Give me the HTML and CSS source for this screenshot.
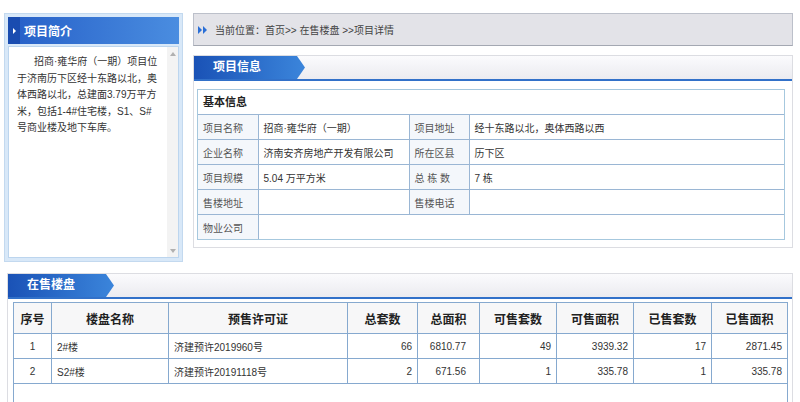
FILE: index.html
```html
<!DOCTYPE html>
<html lang="zh-CN">
<head>
<meta charset="utf-8">
<title>项目详情</title>
<link rel="stylesheet" href="styles.css">
</head>
<body>
<div class="top">
  <div class="intro">
    <div class="intro-head"><span class="intro-arrow"></span><span class="intro-title">项目简介</span></div>
    <div class="intro-body">
      <p class="intro-text">招商·雍华府（一期）项目位于济南历下区经十东路以北，奥体西路以北，总建面3.79万平方米，包括1-4#住宅楼，S1、S#号商业楼及地下车库。</p>
      <div class="scroll"><span class="tri-up"></span><span class="tri-down"></span></div>
    </div>
  </div>
  <div class="main">
    <div class="crumb">
      <svg class="crumb-icon" width="10" height="8" viewBox="0 0 10 8"><polygon points="0,0 4,4 0,8" fill="#2a6fd6"/><polygon points="5,0 9,4 5,8" fill="#2a6fd6"/></svg>
      <span>当前位置：首页&gt;&gt; 在售楼盘 &gt;&gt;项目详情</span>
    </div>
    <div class="panel">
      <div class="panel-head"><div class="tab tab-info">项目信息</div></div>
      <div class="basic">
        <div class="basic-title">基本信息</div>
        <table class="info">
          <colgroup><col class="c-lab"><col class="c-val"><col class="c-lab"><col></colgroup>
          <tr><td class="lab">项目名称</td><td>招商·雍华府（一期）</td><td class="lab">项目地址</td><td>经十东路以北，奥体西路以西</td></tr>
          <tr><td class="lab">企业名称</td><td>济南安齐房地产开发有限公司</td><td class="lab">所在区县</td><td>历下区</td></tr>
          <tr><td class="lab">项目规模</td><td>5.04 万平方米</td><td class="lab">总 栋 数</td><td>7 栋</td></tr>
          <tr><td class="lab">售楼地址</td><td></td><td class="lab">售楼电话</td><td></td></tr>
          <tr><td class="lab">物业公司</td><td colspan="3"></td></tr>
        </table>
      </div>
    </div>
  </div>
</div>
<div class="panel sale">
  <div class="panel-head"><div class="tab tab-sale">在售楼盘</div></div>
  <table class="list">
    <colgroup>
      <col style="width:38px"><col style="width:117px"><col style="width:179px"><col style="width:70px"><col style="width:62px"><col style="width:77px"><col style="width:77px"><col style="width:78px"><col style="width:76px">
    </colgroup>
    <tr><th>序号</th><th>楼盘名称</th><th>预售许可证</th><th>总套数</th><th>总面积</th><th>可售套数</th><th>可售面积</th><th>已售套数</th><th>已售面积</th></tr>
    <tr><td class="ctr">1</td><td>2#楼</td><td>济建预许2019960号</td><td class="num">66</td><td class="num wide">6810.77</td><td class="num">49</td><td class="num">3939.32</td><td class="num">17</td><td class="num">2871.45</td></tr>
    <tr><td class="ctr">2</td><td>S2#楼</td><td>济建预许20191118号</td><td class="num">2</td><td class="num wide">671.56</td><td class="num">1</td><td class="num">335.78</td><td class="num">1</td><td class="num">335.78</td></tr>
    <tr><td colspan="9" class="pager"></td></tr>
  </table>
</div>
</body>
</html>
```
FILE: styles.css
```css
html, body {
  margin: 0;
  padding: 0;
  background: #fff;
}
body {
  font-family: "Liberation Sans", "Noto Sans CJK SC", sans-serif;
  font-size: 10px;
  color: #333;
}
.top {
  display: flex;
  gap: 10px;
  padding: 13px 7px 0 4px;
  align-items: flex-start;
}
.intro {
  width: 179px;
  height: 249px;
  box-sizing: border-box;
  border: 1px solid #c3d9ef;
  background: #d8e8f8;
  padding: 3px;
  display: flex;
  flex-direction: column;
}
.intro-head {
  height: 27px;
  flex: none;
  display: flex;
  align-items: center;
  background: linear-gradient(to right, #1a4cb0 0, #1a4cb0 12px, #2862c9 12px, #4a8de0 100%);
  color: #fff;
  font-weight: bold;
  font-size: 12px;
}
.intro-arrow {
  width: 0;
  height: 0;
  border-left: 3px solid #fff;
  border-top: 3px solid transparent;
  border-bottom: 3px solid transparent;
  margin-left: 5px;
}
.intro-title {
  margin-left: 8px;
}
.intro-body {
  margin-top: 2px;
  flex: 1;
  background: #fff;
  border: 1px solid #bcd5ee;
  display: flex;
}
.intro-text {
  flex: 1;
  margin: 0;
  padding: 7px 7px 0 8px;
  font-size: 10px;
  line-height: 16.5px;
  text-indent: 17px;
  color: #333;
}
.scroll {
  width: 11px;
  flex: none;
  background: #f3f3f3;
  display: flex;
  flex-direction: column;
  justify-content: space-between;
  align-items: center;
  padding: 5px 0 4px;
}
.tri-up {
  width: 0;
  height: 0;
  border-bottom: 4px solid #b0b0b0;
  border-left: 3px solid transparent;
  border-right: 3px solid transparent;
}
.tri-down {
  width: 0;
  height: 0;
  border-top: 4px solid #b0b0b0;
  border-left: 3px solid transparent;
  border-right: 3px solid transparent;
}
.main {
  flex: 1;
  display: flex;
  flex-direction: column;
  gap: 9px;
}
.crumb {
  height: 33px;
  box-sizing: border-box;
  border: 1px solid #bcc0ca;
  border-bottom-color: #a4a8b2;
  background: #e3e3e8;
  display: flex;
  align-items: center;
  padding-left: 4px;
  color: #444;
  font-size: 10px;
}
.crumb-icon {
  margin-right: 7px;
}
.panel {
  border: 1px solid #dcdde2;
  background: #fff;
}
.panel-head {
  height: 23px;
  background: linear-gradient(#fbfbfd, #ebebf0);
  border-bottom: 2px solid #3271c9;
}
.tab {
  height: 100%;
  box-sizing: border-box;
  background: linear-gradient(to right, #1a52b6, #3b85db);
  color: #fff;
  font-weight: bold;
  font-size: 12px;
  line-height: 23px;
  padding-left: 19px;
}
.tab-info {
  width: 111px;
  clip-path: polygon(0 0, 103px 0, 111px 50%, 103px 100%, 0 100%);
}
.tab-sale {
  width: 106px;
  clip-path: polygon(0 0, 98px 0, 106px 50%, 98px 100%, 0 100%);
}
.basic {
  margin: 8px 7px 7px 3px;
  border: 1px solid #a6c8de;
}
.basic-title {
  height: 24px;
  line-height: 25px;
  font-weight: bold;
  font-size: 11px;
  padding-left: 5px;
  color: #222;
}
.info {
  width: 100%;
  border-collapse: collapse;
}
.c-lab {
  width: 60px;
}
.c-val {
  width: 151px;
}
.info td {
  border: 1px solid #9ab6d4;
  height: 24px;
  padding: 0 0 0 5px;
  color: #333;
}
.info td.lab {
  background: #f4f7fb;
  color: #555;
}
.info tr td:first-child {
  border-left: none;
}
.info tr td:last-child {
  border-right: none;
}
.info tr:last-child td {
  border-bottom: none;
}
.sale {
  margin: 11px 7px 0 7px;
}
.list {
  margin: 3px 5px 0 5px;
  width: 774px;
  border-collapse: collapse;
  table-layout: fixed;
}
.list th {
  height: 28px;
  border: 1px solid #86a9cf;
  background: #f7f7f8;
  font-weight: bold;
  font-size: 12px;
  color: #222;
}
.list td {
  height: 24px;
  border: 1px solid #86a9cf;
  padding: 0 0 0 5px;
  color: #333;
}
.list td.ctr {
  text-align: center;
  padding: 0;
}
.list td.num {
  text-align: right;
  padding: 0 5px 0 0;
}
.list td.wide {
  padding-right: 13px;
}
.list td.pager {
  height: 24px;
}
```
